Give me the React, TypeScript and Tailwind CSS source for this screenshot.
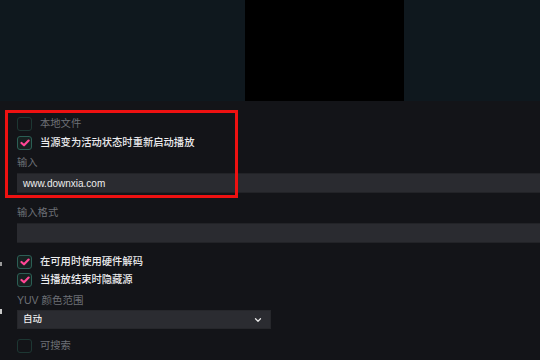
import { ChevronDown } from "lucide-react";

const FONT = "font-['Liberation_Sans','Noto_Sans_CJK_SC',sans-serif]";

function Check({ checked, label }: { checked?: boolean; label: string }) {
  return (
    <div className="flex items-center h-[14px]">
      <div
        className={
          checked
            ? "w-[15px] h-[14px] rounded-[3px] border border-[#2c5f55] bg-[#162120] flex items-center justify-center"
            : "w-[15px] h-[14px] rounded-[3px] border border-[#1d3733] bg-transparent"
        }
      >
        {checked && (
          <svg width="10" height="8" viewBox="0 0 10 8">
            <path
              d="M1.5 4 L4 6.3 L8.6 1.6"
              fill="none"
              stroke="#ff4695"
              strokeWidth="2.2"
              strokeLinecap="round"
              strokeLinejoin="round"
            />
          </svg>
        )}
      </div>
      <span
        className={
          "ml-[8px] text-[10.3px] leading-[14px] " +
          (checked ? "text-[#ececee] font-medium" : "text-[#6d7076]")
        }
      >
        {label}
      </span>
    </div>
  );
}

function Label({ text, className }: { text: string; className?: string }) {
  return (
    <div className={"h-[14px] text-[10.3px] leading-[14px] text-[#6d7076] " + (className ?? "")}>
      {text}
    </div>
  );
}

export default function App() {
  return (
    <div className={"relative w-[540px] h-[360px] overflow-hidden bg-[#131418] " + FONT}>
      <div className="flex h-[101px]">
        <div className="w-[245px] bg-[#0f181e]" />
        <div className="w-[159px] bg-black" />
        <div className="flex-1 bg-[#0f181e]" />
      </div>

      <div className="flex flex-col pl-[17px]">
        <div className="mt-[16px]">
          <Check label="本地文件" />
        </div>
        <div className="mt-[5px]">
          <Check checked label="当源变为活动状态时重新启动播放" />
        </div>
        <Label text="输入" className="mt-[6px]" />
        <div className="mt-[3px] h-[20px] bg-[#2a2b30] border-y border-[#222327] flex items-center pl-[6px] text-[10px] text-[#eeeeee]">
          www.downxia.com
        </div>
        <Label text="输入格式" className="mt-[13px]" />
        <div className="mt-[3px] h-[20px] bg-[#2a2b30] border-y border-[#222327]" />
        <div className="mt-[12px]">
          <Check checked label="在可用时使用硬件解码" />
        </div>
        <div className="mt-[4px]">
          <Check checked label="当播放结束时隐藏源" />
        </div>
        <Label text="YUV 颜色范围" className="mt-[6px] text-[10.5px]" />
        <div className="mt-[3px] w-[254px] h-[19px] bg-[#2b2c31] border border-[#26272b] flex items-center justify-between pl-[5px] pr-[7px] text-[9.5px] font-medium text-[#eeeeee]">
          <span>自动</span>
          <ChevronDown size={10} strokeWidth={3} className="text-[#e8e8e8]" />
        </div>
        <div className="mt-[10px]">
          <Check label="可搜索" />
        </div>
      </div>

      <div className="absolute left-0 top-[262px] w-[2px] h-[4px] bg-[#9a9a9a]" />
      <div className="absolute left-0 top-[309px] w-[2px] h-[5px] bg-[#c8c8c8]" />

      <div className="absolute left-[5px] top-[110px] w-[233px] h-[88px] border-[3px] border-[#ee1111]" />
    </div>
  );
}
